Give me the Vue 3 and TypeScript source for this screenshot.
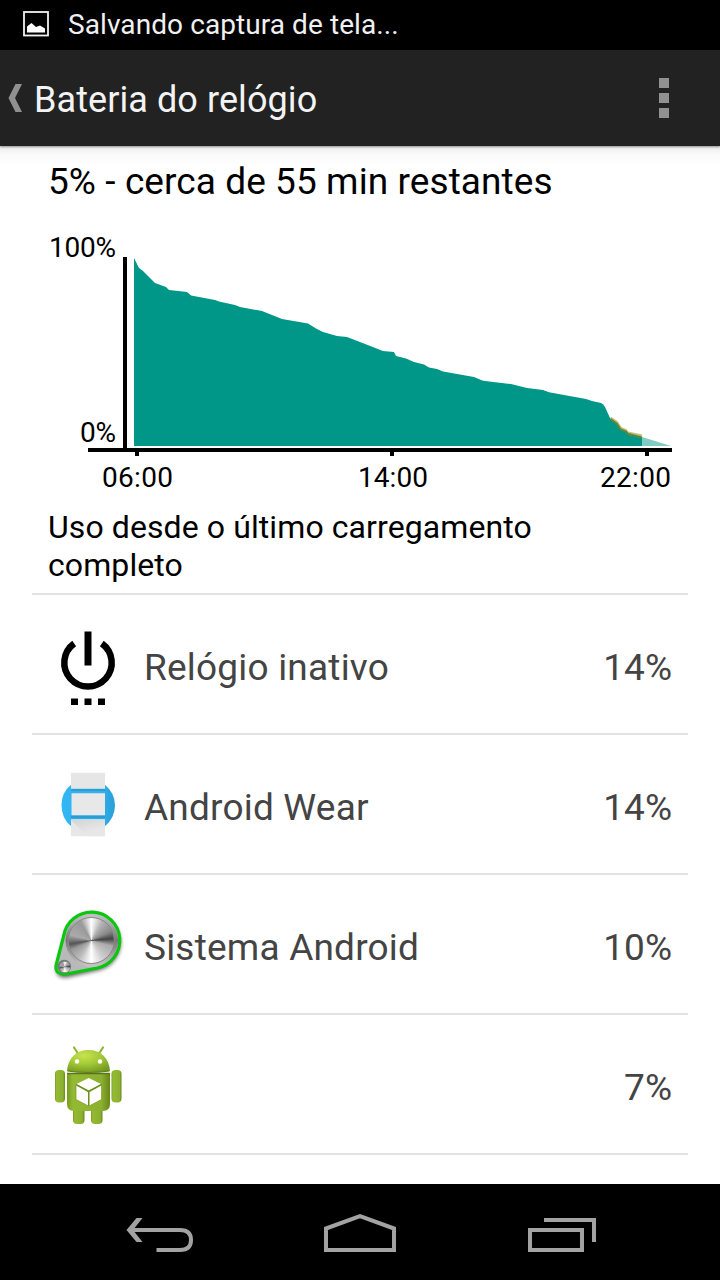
<script setup lang="ts">
interface UsageRow {
  icon: 'power' | 'wear' | 'system' | 'android'
  name: string
  percent: string
}

const rows: UsageRow[] = [
  { icon: 'power', name: 'Relógio inativo', percent: '14%' },
  { icon: 'wear', name: 'Android Wear', percent: '14%' },
  { icon: 'system', name: 'Sistema Android', percent: '10%' },
  { icon: 'android', name: '', percent: '7%' },
]
</script>

<template>
  <div class="screen">
    <div class="status">
      <svg class="picture" width="26" height="26" viewBox="0 0 26 26">
        <rect x="1" y="1" width="24" height="23.5" fill="none" stroke="#f2f2f2" stroke-width="1.8" />
        <path d="M4 21.500V15.500L8.500 12L13 16L17 14.500L22 17.500V21.500Z" fill="#fff" />
      </svg>
      <span class="status-text">Salvando captura de tela...</span>
    </div>

    <header class="bar">
      <svg class="up" width="15" height="28" viewBox="0 0 15 28">
        <path d="M7.500 0H14L7 14L14 28H7.500L0.500 14Z" fill="#909090" />
      </svg>
      <h1 class="title">Bateria do relógio</h1>
      <div class="overflow"><i></i><i></i><i></i></div>
    </header>

    <main class="content">
      <h2 class="summary">5% - cerca de 55 min restantes</h2>

      <svg class="chart" width="720" height="280" viewBox="0 220 720 280">
        <path
          d="M134 446V258L139 268L143 271L155 283L166 287L169 290L187 292L191 295.500L215 300L219 301.500L235 305L240 307L262 311L282 319L308 323.500L316 328.500L323 332L337 336L347 337L360 342L383 351L394 352L396 356L406 358.500L414 362L424 364.500L429 367.500L437 369L443 371.500L474 377L483 380.700L511 384L527 388L543 390L549 392.300L586 399L592 401L601 403Q603.500 404 605 407L610 418L617 424L621 430L626 432L629 435L642 438V446Z"
          fill="#009688"
        />
        <path d="M642 437L671 446H642Z" fill="#80cbc4" />
        <path d="M610.500 417.500L617 422L621 428L626 430L628 432.500L642 435.500" class="edge light" />
        <path d="M610.500 419L617 424L620.500 429.500L626 431.500L628 434L642 437.500" class="edge dark" />
        <path d="M123 257h4v191h-4zM88 448h584v4H88zM135 452h4v4h-4zM390 452h4v4h-4zM645 452h4v4h-4z" fill="#000" />
        <g class="labels">
          <text x="49" y="257" textLength="67">100%</text>
          <text x="80" y="442" textLength="36">0%</text>
          <text x="102" y="487" textLength="71">06:00</text>
          <text x="358" y="487" textLength="70">14:00</text>
          <text x="600" y="487" textLength="71">22:00</text>
        </g>
      </svg>

      <p class="since">Uso desde o último carregamento completo</p>

      <ul class="list">
        <li v-for="row in rows" :key="row.icon" class="row">
          <svg v-if="row.icon === 'power'" class="icon" width="80" height="96" viewBox="0 0 80 96">
            <path d="M26.200 23.500A23.700 23.700 0 1 0 53.800 23.500" fill="none" stroke="#000" stroke-width="6.500" />
            <path d="M36.500 11.500h7v34h-7zM23 78.500h7v6.500h-7zM36.500 78.500h7v6.500h-7zM50 78.500h7v6.500h-7z" />
          </svg>

          <svg v-else-if="row.icon === 'wear'" class="icon" width="80" height="96" viewBox="0 0 80 96">
            <defs>
              <linearGradient id="wear-blue" x1="0" y1="0" x2="1" y2="0">
                <stop offset="0" stop-color="#32b7f5" />
                <stop offset="0.75" stop-color="#32aee9" />
                <stop offset="1" stop-color="#289ed8" />
              </linearGradient>
              <linearGradient id="wear-strap" x1="0" y1="0" x2="0.6" y2="1">
                <stop offset="0" stop-color="#d4d4d4" />
                <stop offset="0.8" stop-color="#e7e7e7" />
              </linearGradient>
            </defs>
            <g transform="translate(0 1.300)">
              <path d="M23 23.500Q13.500 31 13.500 44T23 65V58H57V65Q67 56 67 44T57 23.500V30H23Z" fill="url(#wear-blue)" />
              <path d="M23 30h34v28H23z" fill="#32b1ed" />
              <path d="M23 11.500h34v16H23z" fill="#e6e6e6" />
              <path d="M23 27.500h34v2.500H23zM23 54.500h34v2.500H23z" fill="#2a9dd6" />
              <path d="M23 58.500h34v16.500H23z" fill="#e7e7e7" />
              <path d="M23 58.500h34v16.500H39z" fill="url(#wear-strap)" />
              <path d="M23.500 32h33.500v22h-33.500z" fill="#e8e8e8" />
            </g>
          </svg>

          <svg v-else-if="row.icon === 'system'" class="icon" width="80" height="96" viewBox="0 0 80 96">
            <defs>
              <filter id="sys-shadow" x="-20%" y="-20%" width="140%" height="140%">
                <feGaussianBlur stdDeviation="2" />
              </filter>
              <linearGradient id="sys-rim" x1="0" y1="0" x2="0" y2="1">
                <stop offset="0" stop-color="#c4c4c4" />
                <stop offset="0.5" stop-color="#777" />
                <stop offset="1" stop-color="#c8c8c8" />
              </linearGradient>
            </defs>
            <g transform="translate(0.300 1.500)">
              <path d="M15.500 36A28.500 28.500 0 1 1 49 67L18 74Q7 74.500 8.200 65Z" transform="translate(0 2)" opacity=".65" filter="url(#sys-shadow)" />
              <path d="M15.500 34A28.200 28.200 0 1 1 49 66.500L18 72.500Q6.500 73.500 7.700 64Z" fill="#b9b9b9" stroke="#09c70c" stroke-width="3.200" />
              <circle cx="43.500" cy="39" r="26.300" fill="url(#sys-rim)" />
              <foreignObject x="20" y="16" width="46" height="46"><div class="disc"></div></foreignObject>
              <circle cx="43" cy="39" r="23" fill="none" stroke="#888" stroke-width="1" />
              <circle cx="16" cy="65" r="6.800" fill="#777" />
              <foreignObject x="10.500" y="59.500" width="11" height="11"><div class="disc small"></div></foreignObject>
            </g>
          </svg>

          <svg v-else class="icon" width="80" height="96" viewBox="0 0 80 96">
            <defs>
              <linearGradient id="droid-body" x1="0" y1="0" x2="1" y2="0">
                <stop offset="0" stop-color="#769b20" />
                <stop offset="0.14" stop-color="#94ba33" />
                <stop offset="0.8" stop-color="#8cb02f" />
                <stop offset="1" stop-color="#668719" />
              </linearGradient>
              <radialGradient id="droid-head" cx="0.4" cy="0.25" r="0.8">
                <stop offset="0" stop-color="#c8e34f" />
                <stop offset="0.5" stop-color="#a1c936" />
                <stop offset="1" stop-color="#749821" />
              </radialGradient>
            </defs>
            <path d="M26 7.500L30 13.500M55 7.500L51 13.500" stroke="#91b536" stroke-width="2.200" stroke-linecap="round" />
            <g fill="url(#droid-body)">
              <rect x="7" y="30" width="10" height="32.500" rx="4" />
              <rect x="63.500" y="30" width="10" height="32.500" rx="4" />
              <rect x="25" y="62" width="11.500" height="22" rx="4" />
              <rect x="43" y="62" width="11.500" height="22" rx="4" />
              <path d="M19 34h43v30q0 7-7 7H26q-7 0-7-7z" />
            </g>
            <path d="M19 33.500h43" stroke="#58751b" stroke-width="1.600" />
            <path d="M19 31C20 18 28 10 40.500 10S61 18 62 31Q40 33.500 19 31Z" fill="url(#droid-head)" />
            <path d="M19.500 31Q40 34 61.500 31" stroke="#5f801b" stroke-width="1.200" fill="none" />
            <circle cx="29" cy="21.500" r="2.200" fill="#fff" />
            <circle cx="52" cy="21.500" r="2.200" fill="#fff" />
            <path d="M28 45L40.500 52V66L28 59.500Z" fill="#fcfcfc" stroke="#7a9c28" stroke-width=".7" />
            <path d="M53.500 45L41 52V66L53.500 59.500Z" fill="#fff" stroke="#7a9c28" stroke-width=".7" />
            <path d="M28.500 44L40.700 38L53 44L40.700 50.500Z" fill="#fff" />
            <path d="M28 44.500L40.700 51.300L53.500 44.500M40.700 51V65.500" fill="none" stroke="#6b8c1d" stroke-width="1.200" />
          </svg>

          <span class="name">{{ row.name }}</span>
          <span class="percent">{{ row.percent }}</span>
        </li>
      </ul>
    </main>

    <nav class="nav">
      <svg width="720" height="96" viewBox="0 1184 720 96" fill="none" stroke="#a2a2a2" stroke-width="4">
        <path d="M131 1230H180C188 1230 191 1234 191 1240S188 1250 180 1250H156.500" />
        <path d="M136.500 1218H142.500L133 1230L142.500 1242H136.500L126.500 1230Z" fill="#a2a2a2" stroke="none" />
        <path d="M326 1250V1228.500L360 1216.200L394 1228.500V1250Z" />
        <path d="M530 1230H582V1250H530ZM544 1220H594V1242" />
      </svg>
    </nav>
  </div>
</template>

<style>
html,
body {
  margin: 0;
  background: #fff;
}
</style>

<style scoped>
.screen {
  width: 720px;
  height: 1280px;
  display: flex;
  flex-direction: column;
  overflow: hidden;
  background: #fff;
  font-family: Roboto, "Liberation Sans", sans-serif;
  color: #000;
}
.status {
  flex: none;
  height: 50px;
  display: flex;
  align-items: center;
  background: #000;
  padding-left: 23px;
}
.picture {
  margin-top: -2px;
}
.status-text {
  margin-left: 19px;
  font-size: 28px;
  line-height: 50px;
  letter-spacing: 0.08px;
  color: #f0f0f0;
  white-space: nowrap;
}
.bar {
  flex: none;
  position: relative;
  height: 96px;
  display: flex;
  align-items: center;
  background: #222;
  padding: 0 51px 0 8px;
  box-shadow: 0 1px 2px rgba(0, 0, 0, 0.4);
}
.title {
  margin: 4px 0 0 11px;
  font-size: 36px;
  font-weight: 400;
  line-height: 42px;
  letter-spacing: 0.08px;
  color: #f3f3f3;
  white-space: nowrap;
  flex: 1;
}
.overflow {
  display: flex;
  flex-direction: column;
  gap: 5px;
}
.overflow i {
  width: 10px;
  height: 10px;
  background: #919191;
}
.content {
  flex: 1;
  min-height: 0;
  background: linear-gradient(#ededed, #fafafa 9px, #fff 20px);
}
.summary {
  height: 74px;
  margin: 0 0 0 48px;
  font-size: 37px;
  font-weight: 400;
  line-height: 72px;
  letter-spacing: 0.08px;
  white-space: nowrap;
}
.chart {
  display: block;
}
.edge {
  fill: none;
  stroke-width: 2;
}
.light {
  stroke: #c5bd7c;
}
.dark {
  stroke: #55893a;
}
.labels {
  font-size: 28px;
}
.since {
  height: 85px;
  box-sizing: border-box;
  margin: 0 100px 0 48px;
  padding-top: 8px;
  font-size: 32px;
  line-height: 38px;
  letter-spacing: 0.09px;
}
.list {
  list-style: none;
  margin: 0 32px;
  padding: 8px 0 0;
}
.row {
  height: 140px;
  box-sizing: border-box;
  border-top: 2px solid #e3e3e3;
  display: flex;
  align-items: center;
  padding: 7px 16px 0;
  font-size: 37px;
  line-height: 42px;
  color: #444;
}
.row:last-child {
  height: 142px;
  border-bottom: 2px solid #e3e3e3;
}
.icon {
  flex: none;
}
.name {
  flex: 1;
  margin-left: 16px;
  letter-spacing: 0.2px;
  white-space: nowrap;
}
.disc {
  width: 46px;
  height: 46px;
  border-radius: 50%;
  background: conic-gradient(#fff, #b5b5b5 30deg, #888 65deg, #444 85deg, #aaa 105deg, #ccc 145deg, #fff 180deg, #bbb 215deg, #999 245deg, #555 260deg, #aaa 285deg, #999 330deg, #fff);
}
.disc.small {
  width: 11px;
  height: 11px;
}
.nav {
  flex: none;
  height: 96px;
  background: #000;
}
.nav svg {
  display: block;
}
</style>
